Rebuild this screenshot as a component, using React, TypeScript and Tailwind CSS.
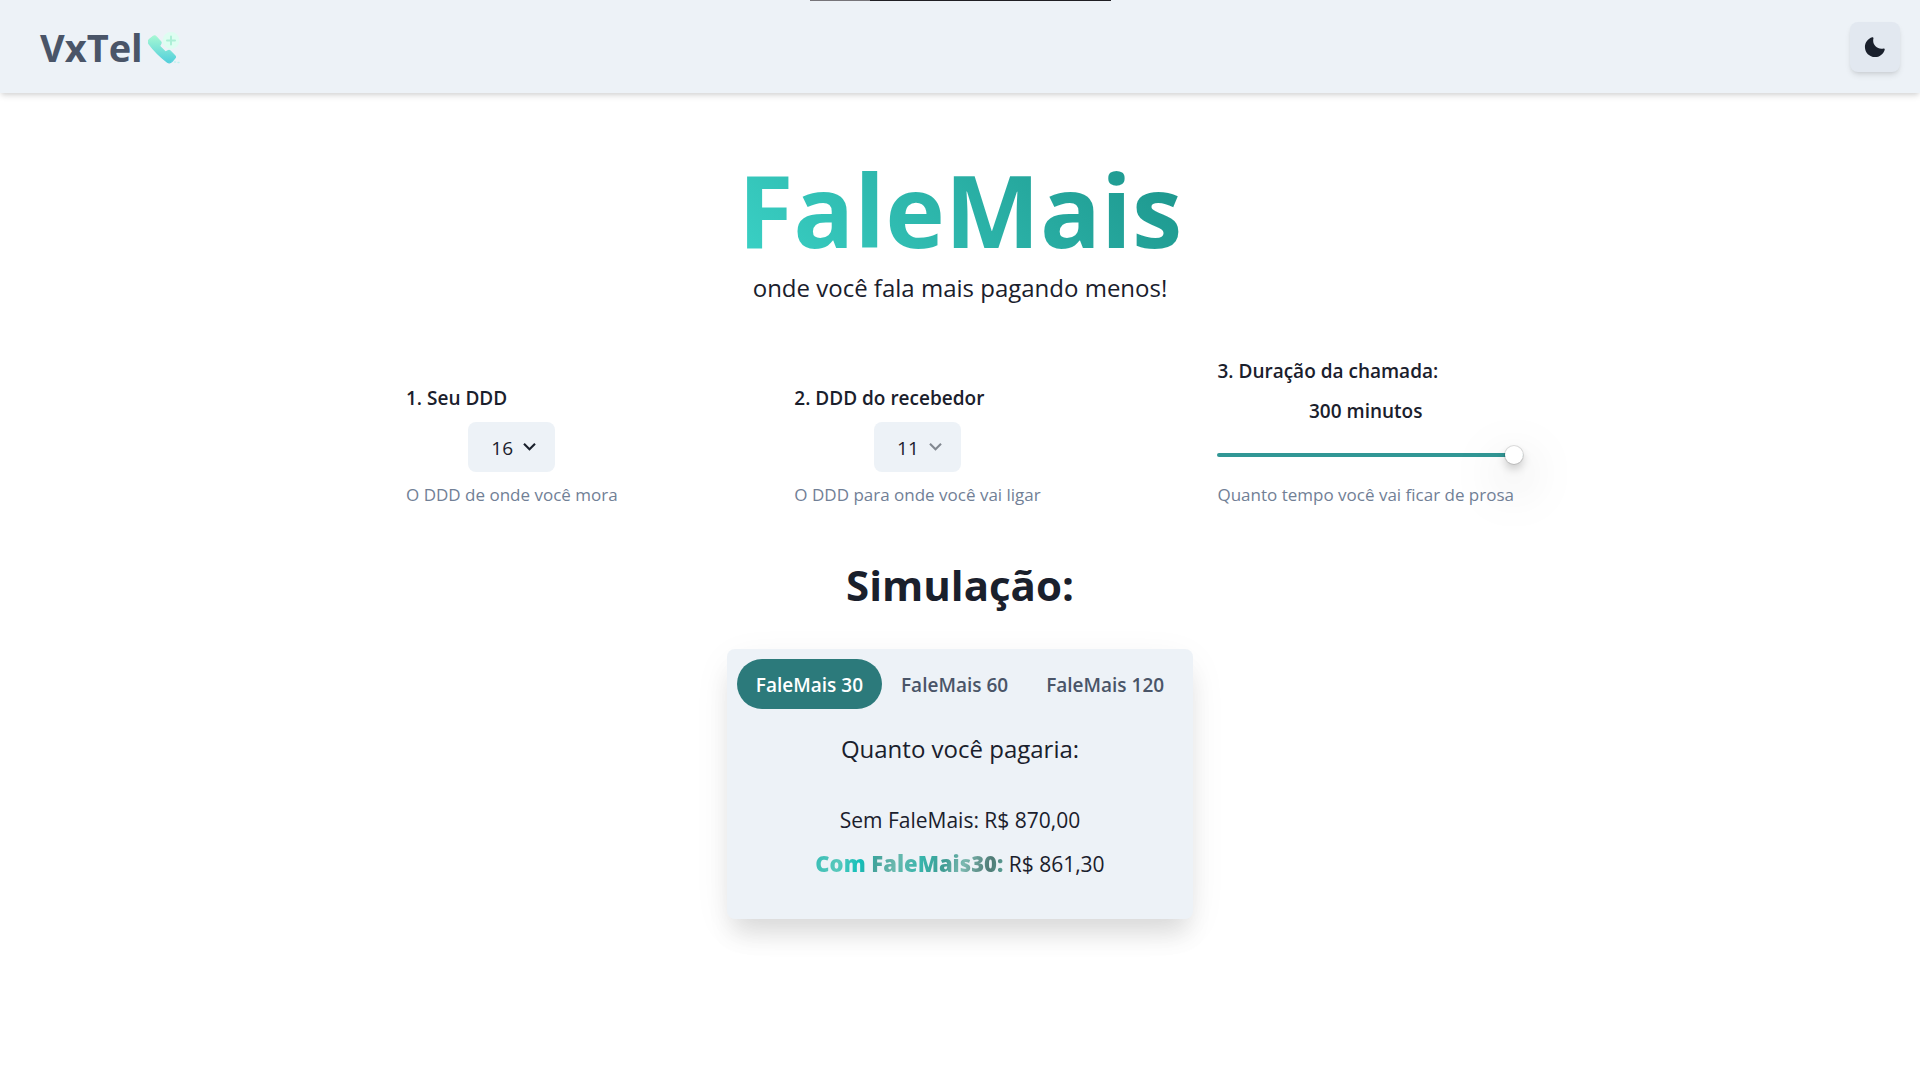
import React, { useState } from "react";

const ddds = ["11", "16", "17", "18"];
const plans = ["30", "60", "120"];

function PhoneLogo() {
  return (
    <svg viewBox="0 0 32 32" className="size-8" aria-hidden="true">
      <defs>
        <linearGradient id="phone" gradientUnits="userSpaceOnUse" x1="0" y1="4" x2="0" y2="30">
          <stop offset="0" stopColor="#a4f7d3" />
          <stop offset="1" stopColor="#55d0db" />
        </linearGradient>
      </defs>
      <path
        d="M1.6 7.2 5.4 4.3c.9-.7 2-.5 2.700.4l4.600 5c.6.8.5 1.700-.1 2.400l-1 2 6 6 2.200-1.300c.8-.6 1.700-.6 2.400.1l4.600 4.700c.8.8.8 1.800.1 2.600l-3 3.400c-1.300 1.300-3.300 1.400-4.800.3C12 24.700 6.500 19.300 1 11.900c-1.100-1.500-.9-3.600.6-4.700Z"
        fill="url(#phone)"
        stroke="url(#phone)"
        strokeWidth="1.200"
      />
      <circle cx="23" cy="8.500" r="8.500" fill="#defdf1" />
      <path d="M23 4.500v8M19 8.500h8" stroke="#acefd6" strokeWidth="2" strokeLinecap="round" />
      <path d="M26.500 30h1M30 30.500h1" stroke="#c0f3f0" strokeWidth="1.500" strokeLinecap="round" />
    </svg>
  );
}

function DddSelect({ id, label, help, value, onChange, faded = false }: {
  id: string; label: string; help: string; value: string; onChange: (v: string) => void; faded?: boolean;
}) {
  return (
    <div className="flex flex-col">
      <label htmlFor={id} className="text-[19px] leading-[30px] font-semibold">{label}</label>
      <div className="relative mt-[9px] self-center">
        <select
          id={id}
          value={value}
          onChange={(e) => onChange(e.target.value)}
          className="block h-[50px] w-[87px] appearance-none rounded-lg bg-[#edf2f7] pt-[2px] pl-[23px] text-[19px]"
        >
          {ddds.map((d) => <option key={d}>{d}</option>)}
        </select>
        <svg viewBox="0 0 24 24" aria-hidden="true" className={`pointer-events-none absolute top-[12px] right-[13px] size-[25px] ${faded ? "opacity-50" : ""}`}>
          <path fill="currentColor" d="M16.590 8.590 12 13.170 7.410 8.590 6 10l6 6 6-6z" />
        </svg>
      </div>
      <p className="mt-[10px] text-[17px] leading-[26px] text-[#718096]">{help}</p>
    </div>
  );
}

export default function App() {
  const [from, setFrom] = useState("16");
  const [to, setTo] = useState("11");
  const [minutes, setMinutes] = useState(300);
  const [plan, setPlan] = useState("30");

  return (
    <div className="min-h-screen overflow-x-hidden bg-white font-['Open_Sans','Noto_Sans',sans-serif] text-[#1a202c]">
      <header className="relative flex h-[93px] items-center justify-between bg-[#edf2f7] pr-5 pl-10 shadow-[0_4px_6px_-1px_rgba(0,0,0,0.12),0_2px_4px_-1px_rgba(0,0,0,0.06)]">
        <div className="absolute inset-x-0 top-0 flex justify-center" aria-hidden="true">
          <span className="h-px w-[60px] bg-[#77757a]" />
          <span className="h-px w-[241px] bg-[#201f24]" />
        </div>
        <a href="#" className="flex items-center gap-[5px] pt-[2px] text-[38px] font-bold text-[#4a5568]">
          VxTel
          <PhoneLogo />
        </a>
        <button aria-label="Alternar tema" className="grid size-[50px] place-items-center rounded-lg bg-[#e2e8f0] shadow-md">
          <svg viewBox="0 0 24 24" className="size-[22px]" aria-hidden="true">
            <path fill="currentColor" d="M21.400 13.700C20.600 13.900 19.800 14 19 14c-5 0-9-4-9-9 0-.8.1-1.600.3-2.400.1-.3 0-.7-.3-1-.3-.3-.6-.4-1-.3C4.300 2.700 1 7.100 1 12c0 6.100 4.900 11 11 11 4.900 0 9.300-3.300 10.600-8.100.1-.3 0-.7-.3-1-.2-.2-.6-.3-.9-.2z" />
          </svg>
        </button>
      </header>

      <main className="flex flex-col items-center px-8 pt-[52px]">
        <h1 className="bg-linear-45 from-[#3bd3c7] to-[#1b938a] bg-clip-text text-[101px] leading-[128px] font-bold text-transparent">FaleMais</h1>
        <p className="text-[24px] leading-[30px]">onde você fala mais pagando menos!</p>

        <section className="mt-[53px] flex w-full max-w-[1108px] items-end justify-between">
          <DddSelect id="from" label="1. Seu DDD" help="O DDD de onde você mora" value={from} onChange={setFrom} />
          <DddSelect id="to" label="2. DDD do recebedor" help="O DDD para onde você vai ligar" value={to} onChange={setTo} faded />
          <div className="flex flex-col">
            <label htmlFor="minutes" className="text-[19px] leading-[30px] font-semibold">3. Duração da chamada:</label>
            <output htmlFor="minutes" className="mt-[10px] text-center text-[19px] leading-[30px] font-semibold">{minutes} minutos</output>
            <input
              id="minutes"
              type="range"
              min={0}
              max={300}
              value={minutes}
              onChange={(e) => setMinutes(Number(e.target.value))}
              style={{ "--fill": `${(minutes / 300) * 100}%` } as React.CSSProperties}
              className="mt-[20px] -mr-[9px] h-[18px] appearance-none bg-transparent [&::-webkit-slider-runnable-track]:h-1 [&::-webkit-slider-runnable-track]:rounded-sm [&::-webkit-slider-runnable-track]:bg-[linear-gradient(to_right,#319795_var(--fill),#e2e8f0_var(--fill))] [&::-webkit-slider-thumb]:-mt-[7px] [&::-webkit-slider-thumb]:size-[18px] [&::-webkit-slider-thumb]:appearance-none [&::-webkit-slider-thumb]:rounded-full [&::-webkit-slider-thumb]:bg-white [&::-webkit-slider-thumb]:shadow-[0_0_0_1px_rgba(0,0,0,0.12),0_5px_10px_rgba(0,0,0,0.2),0_18px_50px_rgba(0,0,0,0.4)]"
            />
            <p className="mt-[18px] text-[17px] leading-[26px] text-[#718096]">Quanto tempo você vai ficar de prosa</p>
          </div>
        </section>

        <h2 className="mt-[47px] text-[42px] leading-[60px] font-bold">Simulação:</h2>

        <section className="mt-[34px] flex h-[270px] flex-col items-center rounded-lg bg-[#edf2f7] p-[10px] shadow-[0_20px_25px_-5px_rgba(0,0,0,0.1),0_10px_40px_-5px_rgba(0,0,0,0.08)]">
          <div role="tablist" className="flex">
            {plans.map((p) => (
              <button
                key={p}
                role="tab"
                aria-selected={plan === p}
                onClick={() => setPlan(p)}
                className={`h-[50px] rounded-full px-[19px] pt-[2px] text-[19px] font-semibold ${plan === p ? "bg-[#2c7a7b] text-white" : "text-[#4a5568]"}`}
              >
                FaleMais {p}
              </button>
            ))}
          </div>
          <div role="tabpanel" className="flex flex-col items-center">
            <p className="mt-[21px] text-[24px] leading-[38px]">Quanto você pagaria:</p>
            <p className="mt-[35px] text-[21px] leading-[34px]">Sem FaleMais: R$ 870,00</p>
            <p className="mt-[9px] text-[21px] leading-[34px]">
              <strong className="bg-[linear-gradient(105deg,#35bdb5_0%,#5ac8bc_14%,#12c0ba_25%,#45a39b_33%,#6ab8ad_43%,#38b5ac_56%,#3f9c93_68%,#7db9b1_78%,#4f7a75_92%,#5aa59b_100%)] bg-clip-text text-[22px] font-extrabold text-transparent">Com FaleMais30:</strong> R$ 861,30
            </p>
          </div>
        </section>
      </main>
    </div>
  );
}
